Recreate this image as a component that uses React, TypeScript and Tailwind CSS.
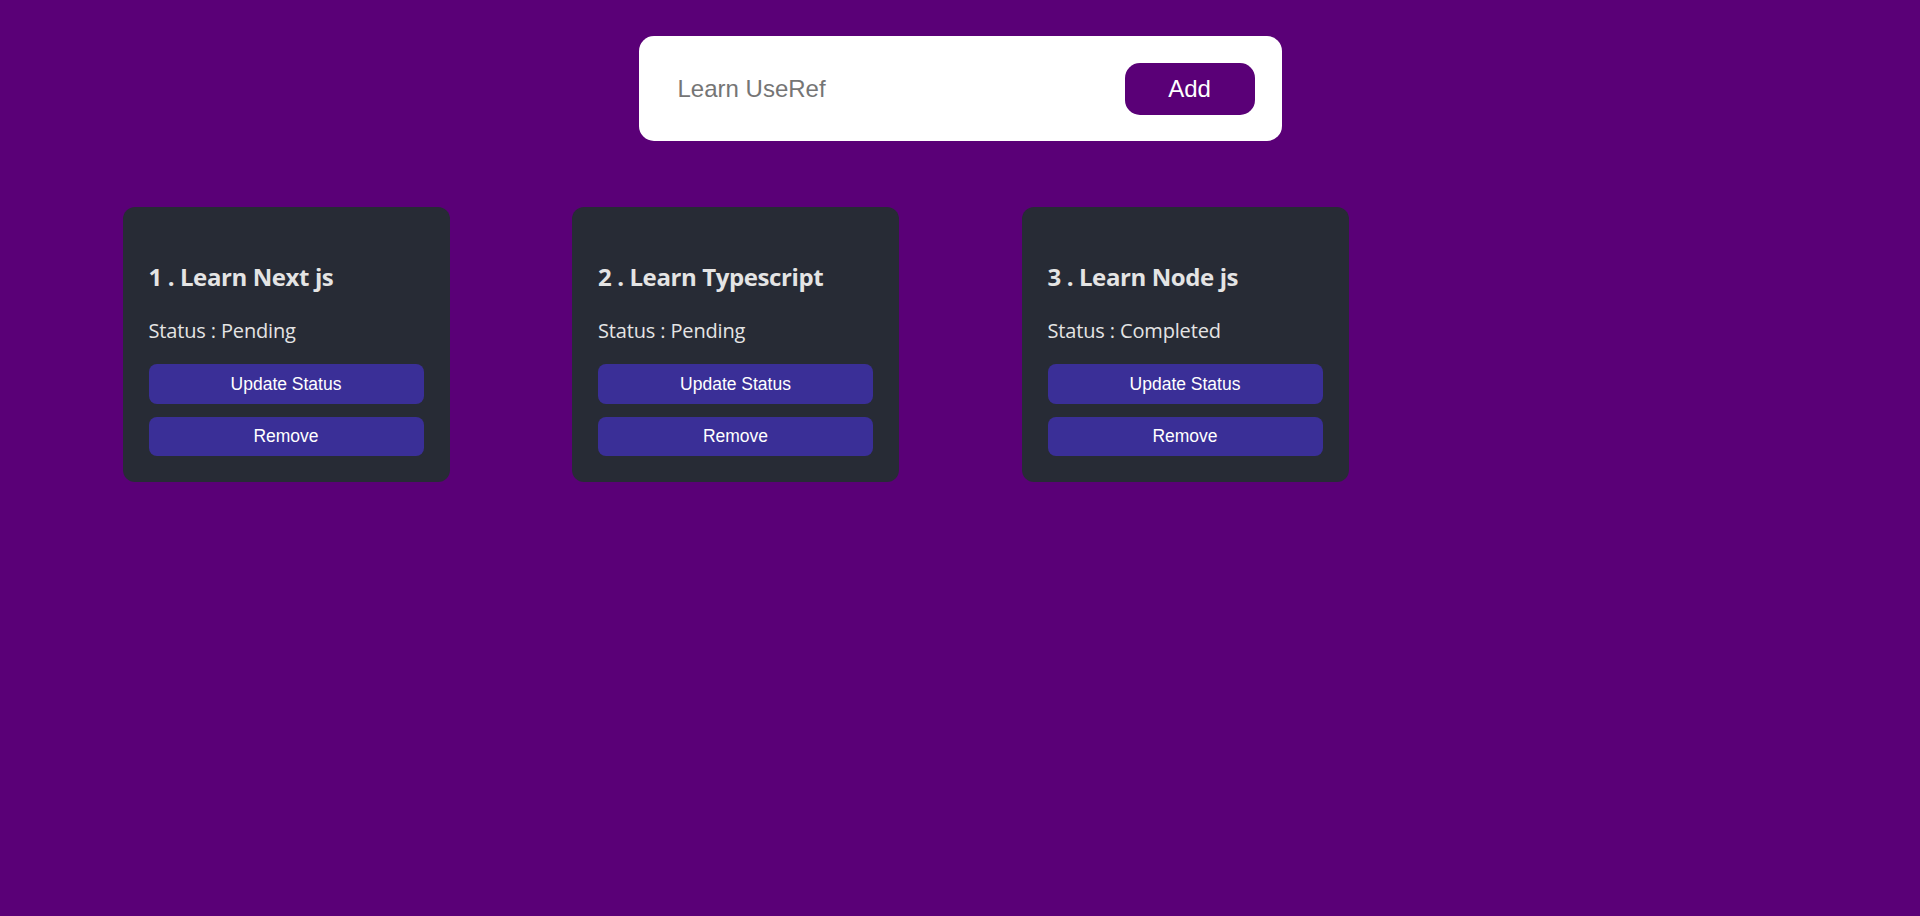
import { useState } from "react";

interface Todo {
  id: number;
  title: string;
  completed: boolean;
}

const initialTodos: Todo[] = [
  { id: 1, title: "Learn Next js", completed: false },
  { id: 2, title: "Learn Typescript", completed: false },
  { id: 3, title: "Learn Node js", completed: true },
];

function TodoCard({
  index,
  todo,
  onToggle,
  onRemove,
}: {
  index: number;
  todo: Todo;
  onToggle: () => void;
  onRemove: () => void;
}) {
  return (
    <div className="w-[327px] shrink-0 rounded-[12px] bg-[#272b35] px-[26px] pt-[54px] pb-[26px] font-['Open_Sans',sans-serif] text-[#e4e4e4]">
      <h2 className="text-[24px] font-bold leading-[32px] tracking-[-0.4px]">
        {index} . {todo.title}
      </h2>
      <p className="mt-[24px] text-[20px] leading-[28px] tracking-[-0.15px]">
        Status : {todo.completed ? "Completed" : "Pending"}
      </p>
      <div className="mt-[19px] flex flex-col gap-[13px]">
        <button
          onClick={onToggle}
          className="h-[40px] w-full rounded-[8px] bg-[#3a2f97] font-['Liberation_Sans',Arial,sans-serif] text-[17.5px] text-white"
        >
          Update Status
        </button>
        <button
          onClick={onRemove}
          className="h-[39px] w-full rounded-[8px] bg-[#3a2f97] font-['Liberation_Sans',Arial,sans-serif] text-[17.5px] text-white"
        >
          Remove
        </button>
      </div>
    </div>
  );
}

export default function App() {
  const [todos, setTodos] = useState<Todo[]>(initialTodos);
  const [text, setText] = useState("");

  const addTodo = () => {
    if (!text.trim()) return;
    setTodos([...todos, { id: Date.now(), title: text.trim(), completed: false }]);
    setText("");
  };

  return (
    <div className="min-h-screen w-full bg-[#5a0077] pt-[36px]">
      <div className="mx-auto flex h-[105px] w-[643px] items-center justify-between rounded-[15px] bg-white pl-[39px] pr-[27px]">
        <input
          value={text}
          onChange={(e) => setText(e.target.value)}
          placeholder="Learn UseRef"
          className="flex-1 bg-transparent font-['Liberation_Sans',Arial,sans-serif] text-[24px] text-[#222] outline-none placeholder:text-[#757575]"
        />
        <button
          onClick={addTodo}
          className="h-[52px] w-[130px] rounded-[15px] bg-[#5a0077] font-['Liberation_Sans',Arial,sans-serif] text-[24px] text-white"
        >
          Add
        </button>
      </div>

      <div className="mt-[66px] flex gap-[122.5px] pl-[122.5px]">
        {todos.map((todo, i) => (
          <TodoCard
            key={todo.id}
            index={i + 1}
            todo={todo}
            onToggle={() =>
              setTodos(
                todos.map((t) =>
                  t.id === todo.id ? { ...t, completed: !t.completed } : t
                )
              )
            }
            onRemove={() => setTodos(todos.filter((t) => t.id !== todo.id))}
          />
        ))}
      </div>
    </div>
  );
}
